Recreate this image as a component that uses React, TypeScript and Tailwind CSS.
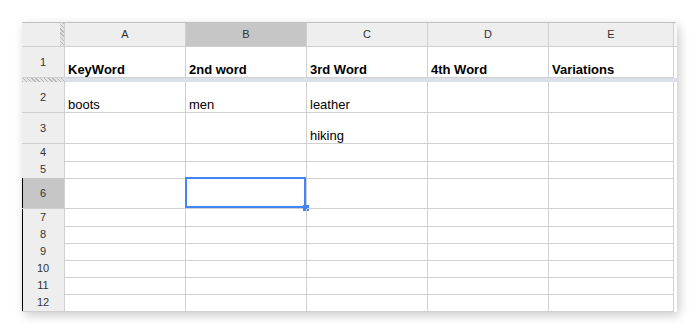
const cols = ["A", "B", "C", "D", "E"];

type Row = { n: number; h: string; cells: string[]; bold?: boolean };

const rows: Row[] = [
  { n: 1, h: "h-[31px]", cells: ["KeyWord", "2nd word", "3rd Word", "4th Word", "Variations"], bold: true },
  { n: 2, h: "h-[31px]", cells: ["boots", "men", "leather", "", ""] },
  { n: 3, h: "h-[31px]", cells: ["", "", "hiking", "", ""] },
  { n: 4, h: "h-[17px]", cells: ["", "", "", "", ""] },
  { n: 5, h: "h-[17px]", cells: ["", "", "", "", ""] },
  { n: 6, h: "h-[31px]", cells: ["", "", "", "", ""] },
  { n: 7, h: "h-[17px]", cells: ["", "", "", "", ""] },
  { n: 8, h: "h-[17px]", cells: ["", "", "", "", ""] },
  { n: 9, h: "h-[17px]", cells: ["", "", "", "", ""] },
  { n: 10, h: "h-[17px]", cells: ["", "", "", "", ""] },
  { n: 11, h: "h-[17px]", cells: ["", "", "", "", ""] },
  { n: 12, h: "h-[17px]", cells: ["", "", "", "", ""] },
];

const grid = "grid grid-cols-[43px_121px_121px_121px_121px_125px_3px]";
const line = "border-r border-b border-[#d0d0d0]";
const hatch =
  "bg-[repeating-linear-gradient(45deg,#b8b8b8_0px,#b8b8b8_1px,#e4e4e4_1px,#e4e4e4_3px)]";

function Spreadsheet() {
  return (
    <div className="w-[654px] bg-white border-t border-[#c0c0c0] shadow-[3px_4px_10px_rgba(0,0,0,0.22)] font-['Liberation_Sans',Arial,sans-serif]">
      {/* column letters */}
      <div className={`${grid} h-[24px]`}>
        <div className={`${line} bg-[#eeeeee] flex justify-end`}>
          <div className={`w-[4px] h-full ${hatch}`} />
        </div>
        {cols.map((c) => (
          <div
            key={c}
            className={`${line} flex items-center justify-center text-[11px] text-[#333] ${
              c === "B" ? "bg-[#c6c6c6]" : "bg-[#eeeeee]"
            }`}
          >
            {c}
          </div>
        ))}
        <div className="bg-[#f6f6f6] border-b border-[#d0d0d0]" />
      </div>

      {rows.map((r) => (
        <div key={r.n}>
          <div className={`${grid} ${r.h}`}>
            <div
              className={`${line} flex items-center justify-center text-[11px] text-[#333] ${
                r.n === 6 ? "bg-[#c6c6c6]" : "bg-[#eeeeee]"
              } ${r.n >= 6 ? "shadow-[inset_1px_0_0_#000]" : ""}`}
            >
              {r.n}
            </div>
            {r.cells.map((t, i) => (
              <div
                key={i}
                className={`${line} relative flex items-end pl-[3px] text-[13px] leading-[15px] text-black whitespace-nowrap ${
                  r.bold ? "font-bold" : ""
                }`}
              >
                {t}
                {r.n === 6 && i === 1 && (
                  <>
                    <div className="absolute -left-[1px] -top-[1px] right-0 bottom-0 border-2 border-[#4285f4]" />
                    <div className="absolute -right-[3px] -bottom-[3px] w-[6px] h-[6px] bg-[#4285f4]" />
                  </>
                )}
              </div>
            ))}
            <div className="bg-white" />
          </div>
          {r.n === 1 && (
            <div className={`${grid} h-[4px]`}>
              <div className={hatch} />
              <div className="col-span-6 bg-[#dadfe8]" />
            </div>
          )}
        </div>
      ))}
    </div>
  );
}

export default function App() {
  return (
    <div className="w-[698px] h-[333px] bg-white pt-[22px] pl-[22px] overflow-hidden">
      <Spreadsheet />
    </div>
  );
}
